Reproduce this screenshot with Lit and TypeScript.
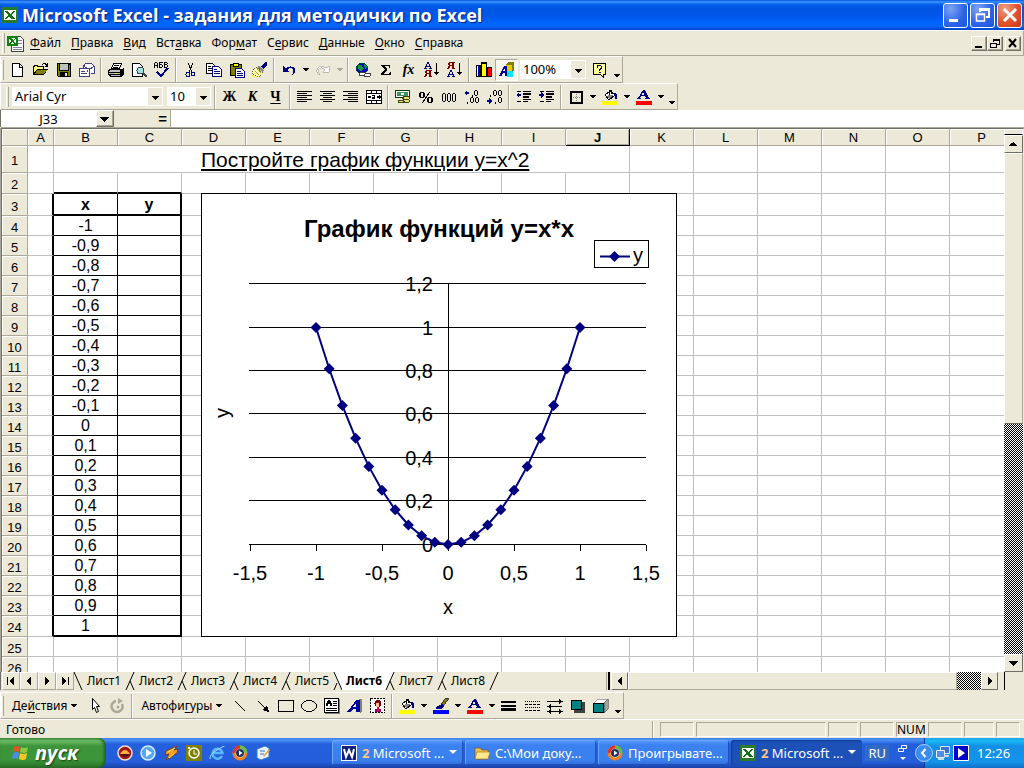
import { LitElement, html, svg, css, nothing } from "lit";
import { customElement } from "lit/decorators.js";
import { classMap } from "lit/directives/class-map.js";

const caretShape = svg`<path d="M5 7h6v1h-1v1h-1v1h-2v-1h-1v-1h-1z"/>`;
const bucket = svg`
  <path d="M3 6l5-4 5 4-6 5z" fill="#fff" stroke="#000"/>
  <path d="M7 6h5l-5 4-3-3z" fill="#808080"/>
  <path d="M7 6V1h2v4" fill="none" stroke="#000"/>
  <path d="M12 4h2v1h1v5h-2V7h-1z" fill="#000080"/>`;
const bars = (widths: number[], x: (w: number) => number) =>
  widths.map((w, i) => svg`<rect x=${x(w)} y=${2 + i * 2} width=${w} height="1"/>`);
const letterA = svg`<path d="M7 1h2l4 8h1v1H9V9h1L9 7H5L4 9h1v1H1V9h1zM7 3L5.500 6h3z" fill="#000080" fill-rule="evenodd"/>`;
const smallA = (y: number, c: string) => svg`<path d="M3 ${y}h2v2h1v2h1v2h1v1H5v-1h1v-1H2v1h1v1H0v-1h1v-2h1v-2h1zM3 ${y + 2}v2h2v-2z" fill=${c} fill-rule="evenodd"/>`;
const smallYa = (y: number, c: string) => svg`<path d="M2 ${y}h6v1H7v5h1v1H5V${y + 4}H3v2H2v1H0v-1h1v-2h1v-1H1v-2h1zM3 ${y + 1}v2h2v-2z" fill=${c} fill-rule="evenodd"/>`;
const zero = (x: number, y: number, h: number) => svg`<path d="M${x + 1} ${y}h2v1h1v${h - 2}h-1v1h-2v-1h-1v-${h - 2}h1zM${x + 1} ${y + 1}v${h - 2}h2v-${h - 2}z" fill-rule="evenodd"/>`;
const downArrow = svg`<path d="M12 1h1v9h2v1h-1v1h-1v1h-1v-1h-1v-1h-1v-1h2z"/>`;

const icons: Record<string, unknown> = {
  new: svg`<path d="M2.500 1.500h7l3 3v10h-10z" fill="#fff" stroke="#000"/><path d="M9 1v4h4" fill="none" stroke="#000"/>`,
  open: svg`<path d="M0 4h1V3h4v1h6v3h4l-4 6H0z" fill="#000"/><path d="M1 5h1V4h2v1h6v2H4l-3 4z" fill="#ffff80"/><path d="M4 8h10l-3 4H2z" fill="#808000"/><path d="M9 2h1V1h3v1h1V1h1v4h-3V4h1V3h-1V2h-2v1H9z"/>`,
  save: svg`<path d="M1 1h14v14H2l-1-1z"/><path d="M2 2h1v7h10V3h1v11H2z" fill="#808000"/><path d="M4 2h8v6H4z" fill="#c0c0c0"/><path d="M4 10h8v4H4z" fill="#000"/><path d="M9 11h2v3H9z" fill="#ece9d8"/>`,
  mail: svg`<path d="M4.500 8V4l2-2.500h6l3 3v7h-4" fill="#fff" stroke="#404080"/><path d="M5 4l5 4 5-4" fill="none" stroke="#404080"/><path d="M.5 6.500h10v8H.5z" fill="#fff" stroke="#404080"/><path d="M2 9h4v1H2zM2 11h6v1H2z" fill="#404080"/><path d="M8 8h1v2H8z" fill="#f00"/>`,
  print: svg`<path d="M5.500 1.500h8l-2 5h-8z" fill="#fff" stroke="#000"/><path d="M6 3h5v1H6zM5 5h5v1H5z"/><path d="M1 7h13l2-1v6l-2 3H2l-2-3V9z"/><path d="M2 8h10v2H1z" fill="#c0c0c0"/><path d="M1 11h11v1H1zM3 13h9v1H3z" fill="#c0c0c0"/><path d="M7 11h2v1H7z" fill="#ff0"/>`,
  preview: svg`<path d="M1.500 1.500h7l3 3v10h-10z" fill="#fff" stroke="#000"/><circle cx="9.500" cy="8.500" r="3.500" fill="#a0e0e0" stroke="#404040"/><path d="M12 11l4 4" stroke="#404040" stroke-width="2"/>`,
  spell: svg`<path d="M1 0h2v1h1v5H3V4H1v2H0V1h1zM1 1v2h2V1zM5 0h4v1H6v1h2v1h1v2H8v1H5zM6 3v2h2V3zM10 0h3v1h1v1h-1v1h1v2h-1v1h-3zM11 1v1h2V1zM11 3v2h2V3z" fill-rule="evenodd"/><path d="M3 10l4 4 7-8" fill="none" stroke="#000080" stroke-width="2"/>`,
  cut: svg`<path d="M5 1l4 9M10 1L6 10" fill="none" stroke="#000"/><circle cx="5" cy="12.500" r="2" fill="none" stroke="#000080"/><circle cx="10" cy="12" r="2" fill="none" stroke="#000080"/>`,
  copy: svg`<path d="M.5 1.500h6l2 2v8h-8z" fill="#fff" stroke="#000"/><path d="M2 4h3v1H2zM2 6h4v1H2zM2 8h4v1H2z"/><path d="M6.500 4.500h6l3 3v7h-9z" fill="#fff" stroke="#000080"/><path d="M8 7h3v1H8zM8 9h6v1H8zM8 11h6v1H8z" fill="#000080"/>`,
  paste: svg`<path d="M1 2h12v12H1z"/><path d="M2 3h10v10H2z" fill="#808000"/><path d="M4 1h6v4H4z" fill="#000"/><path d="M5 2h4v2H5z" fill="#ff0"/><path d="M6.500 6.500h6l3 3v6h-9z" fill="#fff" stroke="#000080"/><path d="M8 9h4v1H8zM8 11h6v1H8zM8 13h6v1H8z" fill="#000080"/>`,
  brush: svg`<path d="M15 0v3l-4 4-2-2 4-5z" fill="#000080"/><path d="M7 4l5 4-1 2-6-5z" fill="#808080"/><path d="M4 5l7 6-4 4-5-2-2-3z" fill="#ffffa0" stroke="#606040" stroke-dasharray="1 1"/><path d="M0 13h2v2H0zM3 14h2v1H3z" fill="#ff0"/><path d="M3 9l4 4M5 7l4 4" stroke="#a0a060"/>`,
  undo: svg`<path d="M2 4v6h6L6 8c3-4 8-2 6 3l-1 2 2-1c4-6-3-10-8-6z" fill="#000080"/>`,
  redo: svg`<path d="M14 4v6H8l2-2C7 4 2 6 4 11l1 2-2-1C-1 6 6 2 11 6z" fill="#fff" stroke="#aca899" stroke-width=".7"/>`,
  web: svg`<circle cx="7" cy="6.500" r="5.500" fill="#0000c0" stroke="#004040"/><path d="M3 3h4v2l2 1-3 3-3-2zM9 2l3 3-2 2zM5 10h4v2H6z" fill="#00a040"/><rect x="4.500" y="10.500" width="6" height="3" rx="1.500" fill="#fff" stroke="#404040"/><rect x="9.500" y="11.500" width="6" height="3" rx="1.500" fill="#fff" stroke="#404040"/>`,
  sum: svg`<path d="M3 3h9v3h-1V4H6l3 3v1l-4 4h6l1-2h1v3H3v-1l4-5-4-3z"/>`,
  sortAsc: svg`${smallA(0, "#000080")}${smallYa(8, "#800000")}${downArrow}`,
  sortDesc: svg`${smallYa(0, "#800000")}${smallA(8, "#000080")}${downArrow}`,
  chart: svg`<path d="M0 3h5v12H0zM5 0h6v15H5zM11 5h5v10h-5z"/><path d="M1 4h1v10H1z" fill="#fff"/><path d="M2 4h2v10H2z" fill="#0000c0"/><path d="M6 2h4v12H6z" fill="#ff0"/><path d="M12 6h3v8h-3z" fill="#f00"/>`,
  drawing: svg`<path d="M7 2l2-2h6v9l-2 1H7z" fill="#808000"/><path d="M7 3h6v6H7z" fill="#e8c800"/><path d="M0 14L5 4h3v10H6v-3H4l-1 3z" fill="#0000a0"/><path d="M4 9h2V6z" fill="#fff"/><circle cx="11" cy="12" r="3.500" fill="#00e8f8"/>`,
  help: svg`<path d="M1.500 1.500h12v11h-2v3l-3-3h-7z" fill="#ffffa0" stroke="#000"/><path d="M5 3h4v1h1v3H9v1H8v1H7V7h1V6h1V4H6v2H5zM7 10h2v1H7z" fill="#000080"/>`,
  left: svg`${bars([15, 10, 15, 10, 15, 10], () => 0)}`,
  center: svg`${bars([15, 9, 15, 9, 15, 9], (w) => (15 - w) / 2)}`,
  right: svg`${bars([15, 10, 15, 10, 15, 10], (w) => 15 - w)}`,
  merge: svg`<path d="M.5 1.500h15v13H.5z" fill="#fff"/><path d="M.5 1.500h15v13H.5zM.5 4.500h15M.5 11.500h15M5.500 1v3M10.500 1v3M5.500 12v3M10.500 12v3" fill="none" stroke="#000"/><path d="M1 8l2-2v1h2v2H3v1zM15 8l-2-2v1h-2v2h2v1zM6 6h3v4H6V8h2V7H6z"/>`,
  money: svg`<path d="M.5 1.500h14v7H.5z" fill="#fff" stroke="#004000"/><path d="M2 3h11v4H2z" fill="#409060"/><circle cx="7.500" cy="5" r="1.500" fill="#fff"/><ellipse cx="11" cy="9" rx="3.500" ry="1.500" fill="#e8e080" stroke="#404000"/><ellipse cx="11" cy="12" rx="3.500" ry="2" fill="#e8e080" stroke="#404000"/><ellipse cx="6" cy="12.500" rx="3" ry="1.500" fill="#e8e080" stroke="#404000"/>`,
  percent: svg`<path d="M11 3l1 .5L5 14l-1-.5z"/><ellipse cx="4" cy="6" rx="2" ry="2.500" fill="none" stroke="#000" stroke-width="1.500"/><ellipse cx="12" cy="11" rx="2" ry="2.500" fill="none" stroke="#000" stroke-width="1.500"/>`,
  thousands: svg`${zero(1, 4, 9)}${zero(6, 4, 9)}${zero(11, 4, 9)}`,
  incDec: svg`<path d="M0 4l3-3v2h2v2H3v2z" fill="#000080"/>${zero(10, 1, 6)}${zero(6, 8, 6)}${zero(11, 8, 6)}<path d="M8 6h1v2H8zM3 13h1v2H3z"/>`,
  decDec: svg`<path d="M5 12l-3-3v2H0v2h2v2z" fill="#000080"/>${zero(6, 1, 6)}${zero(11, 1, 6)}${zero(11, 8, 6)}<path d="M3 6h1v2H3zM8 13h1v2H8z"/>`,
  outdent: svg`<path d="M0 6l3-3v2h2v2H3v2z" fill="#000080"/><path d="M1 2h4v1H1zM7 2h8v1H7zM7 4h8v2H7zM7 7h6v2H7zM7 10h8v1H7zM1 12h4v1H1zM7 12h5v1H7z"/>`,
  indent: svg`<path d="M5 6L2 3v2H0v2h2v2z" fill="#000080"/><path d="M1 2h4v1H1zM7 2h8v1H7zM7 4h8v2H7zM7 7h6v2H7zM7 10h8v1H7zM1 12h4v1H1zM7 12h5v1H7z"/>`,
  border: svg`<path d="M3 3h11v11H3z" fill="none" stroke="#000" stroke-width="2"/><path d="M8.500 5v8M5 8.500h8" stroke="#808080" stroke-dasharray="1 1"/>`,
  fill: svg`${bucket}<path d="M0 12h16v4H0z" fill="#ff0"/>`,
  line: svg`<path d="M13 0h2v2l-5 6-2-2z" fill="#808000" stroke="#000" stroke-width=".7"/><path d="M9 6l2 2-3 3H3V9z" fill="#000080"/><path d="M0 12h16v4H0z" fill="#00f"/>`,
  font: svg`${letterA}<path d="M0 12h16v4H0z" fill="#f00"/>`,
  pointer: svg`<path d="M5.500.500l7 8h-3l2 5-2 1-2-5-2 2z" fill="#fff" stroke="#000" shape-rendering="auto"/>`,
  rotate: svg`<g shape-rendering="auto"><path d="M6 3a5.500 5.500 0 1 0 6 3" fill="none" stroke="#aca899" stroke-width="2.500"/><path d="M8 0l5 3-5 3z" fill="#aca899"/><circle cx="8" cy="9" r="1.500" fill="#aca899"/></g>`,
  straight: svg`<path d="M3 3l10 10" stroke="#000"/>`,
  arrow: svg`<path d="M3 3l7 7" stroke="#000"/><path d="M14 14l-2-7-5 5z"/>`,
  rect: svg`<path d="M.5 2.500h15v11H.5z" fill="none" stroke="#000"/>`,
  oval: svg`<ellipse cx="8" cy="8" rx="7.500" ry="5.500" fill="none" stroke="#000"/>`,
  textbox: svg`<path d="M.5.500h14v14H.5z" fill="#fff" stroke="#000"/><path d="M15 1h1v15H1v-1h14z" fill="#808080"/><path d="M4 2h2v1h1v2h1v3H6V6H4v2H2V5h1V3h1zM9 3h4v1H9zM9 5h4v1H9zM9 7h4v1H9zM2 10h11v1H2zM2 12h11v1H2z"/>`,
  wordart: svg`<path d="M12 1h3v12l-2 2z" fill="#808080"/><path d="M9 2h4v12H9v-3H6l-2 3H0v-1l2-1zM9 5L6 9h3z" fill="#0000a0" fill-rule="evenodd"/>`,
  clipart: svg`<path d="M.5.500h14v14H.5z" fill="#fff" stroke="#000" stroke-dasharray="2 1"/><circle cx="8" cy="5.500" r="3.500" fill="#800000"/><path d="M6 5h3v4H6z" fill="#ffc0a0"/><path d="M5 11h6v3H5z" fill="#800080"/><path d="M7 9h2v4H7z" fill="#f00"/>`,
  weight: svg`<path d="M0 3h15v2H0zM0 7h15v2H0zM0 10h15v3H0z"/>`,
  dash: svg`<path d="M1 3.500h15M1 9.500h15" stroke="#000" stroke-dasharray="1 1"/><path d="M1 6.500h15M1 12.500h15" stroke="#000" stroke-dasharray="3 1"/>`,
  arrows: svg`<path d="M0 3.500h14M2 8.500h13M2 13.500h12" stroke="#000"/><path d="M12 1l4 2.500-4 2.500zM4 6L0 8.500 4 11zM4 11L0 13.500 4 16zM12 11l4 2.500-4 2.500z"/>`,
  shadow: svg`<path d="M4 4h11v11H4z" fill="#404040"/><path d="M1.500 2.500h10v9h-10z" fill="#008080" stroke="#000"/>`,
  cube: svg`<path d="M1 5l4-4h10l-4 4z" fill="#fff" stroke="#808080" stroke-width=".7"/><path d="M11 5l4-4v10l-4 4z" fill="#a0a0a0" stroke="#606060" stroke-width=".7"/><path d="M.5 5.500h10v9H.5z" fill="#008080" stroke="#000"/>`,
};

const icon = (name: string, size = 16) =>
  html`<svg class="icon" viewBox="0 0 16 16" width=${size} height=${size} shape-rendering="crispEdges" aria-hidden="true">${icons[name]}</svg>`;
const tool = (name: string, label: string, pressed = false) =>
  html`<button class=${classMap({ tool: true, pressed })} aria-label=${label}>${icon(name)}</button>`;
const caret = (label: string, dim = false) =>
  html`<button class=${classMap({ caret: true, dim })} aria-label=${label}><svg viewBox="5 7 6 3" width="6" height="3" shape-rendering="crispEdges">${caretShape}</svg></button>`;
const more = html`<button class="caret more" aria-label="Другие кнопки"><svg viewBox="5 7 6 3" width="6" height="3" shape-rendering="crispEdges">${caretShape}</svg></button>`;
const sep = html`<span class="sep"></span>`;
const grip = html`<span class="grip"></span>`;
const tri = (d: string) =>
  html`<svg viewBox="0 0 10 10" width="10" height="10" shape-rendering="crispEdges" aria-hidden="true"><path d=${d} /></svg>`;
const UP = "M4 3h1v1h1v1h1v1h1v1H0V6h1V5h1V4h2z";
const LEFT = "M7 1v8H6V8H5V7H4V6H3V4h1V3h1V2h1V1z";
const RIGHT = "M3 1v8h1V8h1V7h1V6h1V4H6V3H5V2H4V1z";
const DOWN = "M0 3h9v1H8v1H7v1H6v1H5v1H4V7H3V6H2V5H1V4H0z";

@customElement("xl-chart")
export class XlChart extends LitElement {
  static styles = css`
    :host { display: block; }
    svg { display: block; background: #fff; border: 1px solid #000; box-sizing: border-box; }
    text { font-family: "Liberation Sans", Arial, sans-serif; font-size: 20px; }
    .title { font-size: 24px; font-weight: 700; }
    .grid { stroke: #000; fill: none; shape-rendering: crispEdges; }
    .series { stroke: #000080; fill: none; stroke-width: 2; }
    .mark { fill: #000080; }
  `;

  render() {
    const px = (v: number) => 246 + 132 * v;
    const py = (v: number) => 350.5 - 217 * v;
    const label = (v: number) => String(v).replace(".", ",");
    const points = Array.from({ length: 21 }, (_, i) => (i - 10) / 10).map((x) => [px(x), py(x * x)]);
    const diamond = (x: number, y: number) => svg`<path class="mark" d="M${x} ${y - 5.5}l5.500 5.500-5.500 5.500-5.500-5.500z"/>`;
    return html`
      <svg width="476" height="444" viewBox="0 0 474 442" role="img" aria-label="График функций">
        <text class="title" x="237" y="43" text-anchor="middle">График функций y=x*x</text>
        <g class="grid">
          ${[0, 0.2, 0.4, 0.6, 0.8, 1, 1.2].map((v) => svg`<path d="M47 ${Math.round(py(v)) - 0.5}H444"/>`)}
          ${[-1.5, -1, -0.5, 0, 0.5, 1, 1.5].map((v) => svg`<path d="M${Math.floor(px(v)) + 0.5} 351v6"/>`)}
          <path d="M246.500 90v261" />
        </g>
        ${[0, 0.2, 0.4, 0.6, 0.8, 1, 1.2].map((v) => svg`<text x="231" y=${Math.round(py(v)) + 7} text-anchor="end">${label(v)}</text>`)}
        ${[-1.5, -1, -0.5, 0, 0.5, 1, 1.5].map((v) => svg`<text x=${px(v)} y="386" text-anchor="middle">${label(v)}</text>`)}
        <polyline class="series" points=${points.map((p) => p.join(",")).join(" ")} />
        ${points.map(([x, y]) => diamond(x, y))}
        <text x="246" y="420" text-anchor="middle">x</text>
        <text transform="translate(27 219) rotate(-90)" text-anchor="middle">y</text>
        <rect class="grid" x="392.500" y="46.500" width="54" height="27" />
        <path class="series" d="M398 62.500h30" />
        ${diamond(412.5, 62.5)}
        <text x="431" y="68">y</text>
      </svg>
    `;
  }
}

@customElement("app-root")
export class AppRoot extends LitElement {
  static styles = css`
    :host {
      --face: #ece9d8;
      --shade: #aca899;
      --dark: #716f64;
      --ui: "Noto Sans", Tahoma, sans-serif;
      display: flex;
      flex-direction: column;
      height: 100vh;
      overflow: hidden;
      background: var(--face);
      color: #000;
      font: 12px/16px var(--ui);
    }
    * { box-sizing: border-box; }
    button, input, select { font: inherit; color: inherit; border: 0; margin: 0; padding: 0; background: none; border-radius: 0; }
    button { display: flex; align-items: center; justify-content: center; flex: none; }
    svg { display: block; flex: none; }
    u { text-underline-offset: 2px; }

    .title { display: flex; align-items: center; flex: none; height: 30px; padding: 0 2px 0 2px; gap: 4px; color: #fff;
      background: linear-gradient(#0a57e0 0, #3c96ff 2px, #0a62f0 4px, #0054e3 8px, #0058ea 17px, #0066ff 23px, #0066fc 26px, #0043cf 30px); }
    .title h1 { flex: 1; margin: 0; font: 700 18px/30px "Open Sans", "Trebuchet MS", sans-serif; white-space: nowrap; text-shadow: 1px 1px 1px #0a1f80; }
    .win { width: 25px; height: 25px; border: 1px solid #fff; border-radius: 3px; background: radial-gradient(at 30% 20%, #7fa4f5, #2a62e8 60%, #1c54dc); }
    .win + .win { margin-left: -2px; }
    .win.close { background: radial-gradient(at 30% 20%, #f0a080, #e0532e 55%, #c83a10); }

    .menu { display: flex; align-items: center; flex: none; height: 26px; padding: 0 2px; border-top: 1px solid #fff; border-bottom: 1px solid var(--shade); border-right: 1px solid var(--shade); }
    .menu nav { display: flex; flex: 1; gap: 10px; padding-left: 6px; }
    .menu a { color: #000; text-decoration: none; }
    .grip { flex: none; width: 3px; height: 20px; border-right: 1px solid var(--shade); border-left: 1px solid #fff; margin-right: 2px; }
    .mdi { width: 16px; height: 15px; border: 1px solid; border-color: #fff var(--dark) var(--dark) #fff; background: var(--face); box-shadow: inset -1px -1px var(--shade); }
    .mdi.gap { margin-left: 2px; }

    .bar { display: flex; align-items: center; align-self: flex-start; flex: none; height: 27px; border: 1px solid; border-color: #fff var(--shade) var(--shade) #fff; }
    .bar.format { padding-left: 5px; }
    .bar.format .grip { margin-right: 3px; }
    .tool { width: 23px; height: 22px; }
    .tool.pressed { border: 1px solid; border-color: var(--shade) #fff #fff var(--shade); background: #f8f6ee; }
    .caret { width: 11px; height: 22px; }
    .caret.dim { fill: var(--shade); }
    .more { align-items: flex-end; padding-bottom: 4px; }
    .sep { flex: none; width: 2px; height: 24px; margin: 0 2px; border-left: 1px solid var(--shade); border-right: 1px solid #fff; }
    .bold, .italic, .under, .fx { font: 700 14px/16px "Liberation Serif", serif; }
    .italic { font-style: italic; }
    .under { text-decoration: underline; text-underline-offset: 2px; }
    .fx { font: italic 700 14px/16px "Liberation Serif", serif; }
    .combo { display: grid; align-items: center; height: 19px; margin: 0 2px 0 0; background: #fff; border: 1px solid #fff; }
    .combo select { grid-area: 1 / 1; appearance: none; width: 100%; height: 17px; padding-left: 2px; font-size: 13px; line-height: 17px; }
    .combo svg { grid-area: 1 / 1; justify-self: end; width: 14px; height: 17px; background: var(--face); pointer-events: none; }
    .combo.font { width: 151px; }
    .combo.size { width: 44px; margin-right: 1px; margin-left: 2px; }
    .combo.zoom { width: 66px; margin-left: 2px; }
    .textual { padding: 0 6px; height: 22px; gap: 4px; }

    .formula { display: flex; flex: none; height: 17px; }
    .formula .name { width: 96px; background: #fff; text-align: center; font-size: 13px; border-left: 1px solid var(--dark); }
    .drop { width: 18px; border: 1px solid; border-color: #fff var(--dark) var(--dark) #fff; box-shadow: inset -1px -1px var(--shade); }
    .formula .eq { width: 57px; padding-right: 3px; justify-content: flex-end; border-right: 1px solid var(--shade); font: 700 15px/16px "Liberation Sans", sans-serif; }
    .formula .value { flex: 1; min-width: 0; background: #fff; }

    .work { display: flex; flex: 1; min-height: 0; border: 1px solid; border-color: var(--dark) var(--face) transparent var(--dark); border-bottom: 0; margin-left: 1px; box-shadow: 0 -1px var(--shade), -1px 0 var(--shade); margin-top: 1px; }
    .sheet { position: relative; flex: 1; min-width: 0; overflow: hidden; background: #fff; }
    .cells { width: calc(52px + 15 * 64px); min-width: 100%; table-layout: fixed; border-collapse: separate; border-spacing: 0; font: 16px/18px "Liberation Sans", Arial, sans-serif; text-align: center; }
    .cells th { font-weight: 400; font-size: 13px; line-height: 15px; padding: 0; background: var(--face); border-right: 1px solid var(--shade); border-bottom: 1px solid var(--shade); box-shadow: inset 1px 1px #fff; }
    .cells tbody th { padding-top: 3px; }
    .cells th.on { font-weight: 700; border-color: #000; box-shadow: inset 1px 1px #fff, inset -1px -1px var(--shade); }
    .cells td { padding: 1px 0 0; border-right: 1px solid #c0c0c0; border-bottom: 1px solid #c0c0c0; white-space: nowrap; }
    .c-rh { width: 26px; } .c-a { width: 26px; } .c-std { width: 64px; }
    .r-head { height: 17px; } .r-1 { height: 27px; } .r-2, .r-24 { height: 21px; } .r-3 { height: 22px; } .r-n { height: 20px; }
    .cells td.heading { text-align: left; padding-left: 147px; font-size: 21px; line-height: 22px; text-decoration: underline; text-decoration-thickness: 2px; text-underline-offset: 2px; }
    .cells td.v { border-color: #000; }
    .cells td.head { font-weight: 700; }
    .cells td.wr { border-right: 2px solid #000; }
    .cells td.wb { border-bottom: 2px solid #000; }
    xl-chart { position: absolute; left: 199px; top: 64px; }

    .vscroll { display: flex; flex-direction: column; flex: none; width: 19px; background: var(--face); }
    .dither { background: repeating-conic-gradient(#000 0 25%, #fff 0 50%) 0 0 / 2px 2px; }
    .split { height: 6px; border: 1px solid #fff; border-bottom-color: #000; }
    .sbtn { border: 1px solid; border-color: #fff var(--dark) var(--dark) #fff; background: var(--face); }
    .vscroll .sbtn { height: 18px; width: 100%; }
    .vscroll .thumb { flex: 270; border: 1px solid; border-color: #fff var(--shade) var(--dark) #fff; }
    .vscroll .dither { flex: 231; }

    .tabs { display: flex; flex: none; height: 18px; padding-left: 1px; border-left: 1px solid var(--dark); }
    .tabs .nav { width: 18px; border: 1px solid; border-color: #fff var(--shade) var(--shade) #fff; }
    .tab { width: 44px; height: 18px; white-space: nowrap; }
    .tab.on { background: #fff; font-weight: 700; }
    .slash { overflow: visible; }
    .hscroll { display: flex; width: 418px; margin-left: auto; }
    .hscroll .bar-split { width: 4px; border-left: 1px solid var(--shade); border-right: 2px solid #000; margin-right: 1px; }
    .hscroll .sbtn { width: 17px; }
    .hscroll .thumb { flex: 328; border: 1px solid; border-color: #fff var(--shade) var(--shade) #fff; }
    .hscroll .dither { flex: 24; }
    .hscroll .end { width: 20px; border-left: 1px solid #000; margin-left: 6px; }

    .drawbar { margin-top: 2px; }
    .status { display: flex; flex: none; align-items: center; height: 19px; gap: 2px; padding: 1px 4px 0 6px; border-top: 1px solid #fff; }
    .status output { flex: 1; }
    .status .panel { height: 15px; border: 1px solid; border-color: var(--shade) #fff #fff var(--shade); line-height: 14px; text-align: center; }
    .status .edge { width: 2px; height: 18px; border-left: 1px solid var(--shade); border-right: 1px solid #fff; margin-right: 4px; }
    .p1 { width: 34px; } .p2 { width: 130px; } .p3 { width: 30px; } .p4 { width: 24px; }

    .task { display: flex; flex: none; align-items: stretch; height: 30px; color: #fff; background: linear-gradient(#3a80ee 0, #4a93f5 2px, #2560dc 6px, #245edb 24px, #1941a5 30px); font-size: 13px; }
    .start { width: 106px; justify-content: flex-start; padding-left: 11px; gap: 6px; border-radius: 0 8px 8px 0; background: linear-gradient(#4f9d4a 0, #6cbb68 3px, #3d943a 8px, #3b9639 22px, #2a6f28 30px); box-shadow: inset -2px 0 3px #1f5f1e; font: italic 700 20px/24px "Open Sans", sans-serif; text-shadow: 1px 1px 2px #143c14; }
    .quick { display: flex; align-items: center; gap: 7px; padding-left: 11px; width: 226px; }
    .quick button { width: 16px; height: 16px; }
    .apps { display: flex; flex: 1; gap: 2px; padding: 2px 0 3px; min-width: 0; }
    .app { flex: 0 1 131px; min-width: 0; justify-content: flex-start; gap: 5px; padding: 0 6px 0 9px; border-radius: 3px; background: linear-gradient(#5a9cff, #3c81f0 5px, #3b80ef 20px, #2f6bdb); box-shadow: inset 1px 1px #6ba6ff, inset -1px -1px #2350b8; }
    .app span { flex: 1; text-align: left; white-space: nowrap; }
    .app b { color: #ffc87a; font-weight: 700; }
    .app.on { background: #1e51b8; box-shadow: inset 1px 1px 2px #123c8c; }
    .lang { display: flex; align-items: center; gap: 9px; padding: 0 17px 0 0; }
    .lang span { background: #316ac5; padding: 0 3px; }
    .tray { display: flex; align-items: center; flex: none; width: 100px; gap: 2px; background: linear-gradient(#18a4f0 0, #19b9f3 3px, #1290e8 8px, #1493ea 24px, #0f6fc8 30px); border-left: 1px solid #0b3b9c; }
    .tray button { margin-left: -10px; }
    .tray time { margin-left: 6px; }
  `;

  private sheetTable() {
    const cols = "ABCDEFGHIJKLMNOP".split("");
    const values = Array.from({ length: 21 }, (_, i) => String((i - 10) / 10).replace(".", ","));
    const cell = (r: number, c: string) => {
      const inTable = r >= 3 && r <= 24;
      const data = (c === "B" || c === "C") && inTable;
      const text = data ? (r === 3 ? (c === "B" ? "x" : "y") : c === "B" ? values[r - 4] : "") : "";
      return html`<td class=${classMap({
        v: data,
        head: data && r === 3,
        wr: (c === "A" || c === "C") && inTable,
        wb: (c === "B" || c === "C") && (r === 2 || r === 3 || r === 24),
      })}>${text}</td>`;
    };
    const rowClass = (r: number) => ([1, 2, 3, 24].includes(r) ? `r-${r}` : "r-n");
    return html`
      <table class="cells">
        <colgroup>
          <col class="c-rh" /><col class="c-a" />
          ${cols.slice(1).map(() => html`<col class="c-std" />`)}
        </colgroup>
        <thead>
          <tr class="r-head"><th></th>${cols.map((c) => html`<th scope="col" class=${classMap({ on: c === "J" })}>${c}</th>`)}</tr>
        </thead>
        <tbody>
          ${Array.from({ length: 26 }, (_, i) => i + 1).map((r) => html`
            <tr class=${rowClass(r)}>
              <th scope="row">${r}</th>
              ${r === 1
                ? html`<td></td><td class="heading" colspan="9">Постройте график функции y=x^2</td>${cols.slice(10).map(() => html`<td></td>`)}`
                : cols.map((c) => cell(r, c))}
            </tr>`)}
        </tbody>
      </table>`;
  }

  private slash(before: boolean, after: boolean) {
    return html`<svg class="slash" width="8" height="18" viewBox="0 0 8 18" aria-hidden="true">
      ${before ? svg`<path d="M0 0h8v18z" fill="#fff"/>` : nothing}
      ${after ? svg`<path d="M0 0h8L0 18z" fill="#fff"/>` : nothing}
      <path d=${before ? "M0 0l8 18M0 18l3-7" : "M8 0L0 18M4 9l4 9"} fill="none" stroke="#000" />
    </svg>`;
  }

  render() {
    const menu = [["", "Ф", "айл"], ["", "П", "равка"], ["", "В", "ид"], ["Вст", "а", "вка"], ["Фор", "м", "ат"], ["С", "е", "рвис"], ["", "Д", "анные"], ["", "О", "кно"], ["", "С", "правка"]];
    const sheets = [1, 2, 3, 4, 5, 6, 7, 8];
    const excel = html`<svg viewBox="0 0 16 16" width="16" height="16" shape-rendering="crispEdges" aria-hidden="true"><path d="M0 0h16v16H0z" fill="#2a7a2a"/><path d="M2 3h12v10H2z" fill="#fff"/><path d="M3 4h3l2 3 3-3h2L9 8l4 4H9L7 9l-3 3H3l3-4z" fill="#107010"/></svg>`;
    return html`
      <header class="title">
        ${excel}
        <h1>Microsoft Excel - задания для методички по Excel</h1>
        <button class="win" aria-label="Свернуть"><svg width="18" height="18"><path d="M2 13h9v3H2z" fill="#fff" /></svg></button>
        <button class="win" aria-label="Восстановить"><svg width="18" height="18" fill="none" stroke="#fff"><path d="M6 6V3h9v8h-3M6 4h9" stroke-width="2" /><path d="M2.500 8h8v7h-8zM2 8.500h9" stroke-width="1.500" /></svg></button>
        <button class="win close" aria-label="Закрыть"><svg width="18" height="18"><path d="M3 3l12 12M15 3L3 15" stroke="#fff" stroke-width="3" /></svg></button>
      </header>

      <div class="menu">
        ${grip}
        <svg width="17" height="17" viewBox="0 0 17 17" shape-rendering="crispEdges" aria-hidden="true"><path d="M4.500 1.500h9l3 3v12h-12z" fill="#fff" stroke="#404040"/><path d="M11 5h4v1h-4zM11 8h4v1h-4zM6 12h9v1H6zM6 14h9v1H6z" fill="#8080a0"/><path d="M0 1h11v10H0z" fill="#108010"/><path d="M2 3h7v6H2z" fill="#fff"/><path d="M2 3h2l2 2 2-2h1L7 6l2 3H7L5.500 7 4 9H2l2-3z" fill="#108010"/></svg>
        <nav>${menu.map(([a, b, c]) => html`<a href="#">${a}<u>${b}</u>${c}</a>`)}</nav>
        <button class="mdi" aria-label="Свернуть окно"><svg width="12" height="11"><path d="M2 8h7v2H2z" /></svg></button>
        <button class="mdi" aria-label="Восстановить окно"><svg width="12" height="11" fill="none" stroke="#000" shape-rendering="crispEdges"><path d="M4 4V1.500h6v5H8M4 2h6M1.500 5h6v4.500h-6zM1 5.500h7" /></svg></button>
        <button class="mdi gap" aria-label="Закрыть окно"><svg width="12" height="11"><path d="M2 1l7 8M9 1L2 9" stroke="#000" stroke-width="2" /></svg></button>
      </div>

      <div class="bar" role="toolbar" aria-label="Стандартная">
        ${grip}
        ${tool("new", "Создать")}${tool("open", "Открыть")}${tool("save", "Сохранить")}${tool("mail", "Письмо")}${sep}
        ${tool("print", "Печать")}${tool("preview", "Просмотр")}${tool("spell", "Орфография")}${sep}
        ${tool("cut", "Вырезать")}${tool("copy", "Копировать")}${tool("paste", "Вставить")}${tool("brush", "Формат по образцу")}${sep}
        ${tool("undo", "Отменить")}${caret("Список отмены")}${tool("redo", "Вернуть")}${caret("Список возврата", true)}${sep}
        ${tool("web", "Гиперссылка")}${tool("sum", "Автосумма")}
        <button class="tool fx" aria-label="Функция">fx</button>
        ${tool("sortAsc", "По возрастанию")}${tool("sortDesc", "По убыванию")}${sep}
        ${tool("chart", "Диаграмма")}${tool("drawing", "Рисование", true)}
        <label class="combo zoom"><select aria-label="Масштаб"><option>100%</option></select><svg viewBox="0 0 14 17" shape-rendering="crispEdges"><path d="M4 8h7v1h-1v1H9v1H8v1H7v-1H6v-1H5V9H4z" /></svg></label>
        ${tool("help", "Справка")}${more}
      </div>

      <div class="bar format" role="toolbar" aria-label="Форматирование">
        ${grip}
        <label class="combo font"><select aria-label="Шрифт"><option>Arial Cyr</option></select><svg viewBox="0 0 14 17" shape-rendering="crispEdges"><path d="M4 8h7v1h-1v1H9v1H8v1H7v-1H6v-1H5V9H4z" /></svg></label>
        <label class="combo size"><select aria-label="Размер"><option>10</option></select><svg viewBox="0 0 14 17" shape-rendering="crispEdges"><path d="M4 8h7v1h-1v1H9v1H8v1H7v-1H6v-1H5V9H4z" /></svg></label>${sep}
        <button class="tool bold">Ж</button><button class="tool italic">К</button><button class="tool under">Ч</button>${sep}
        ${tool("left", "По левому краю")}${tool("center", "По центру")}${tool("right", "По правому краю")}${tool("merge", "Объединить")}${sep}
        ${tool("money", "Денежный формат")}${tool("percent", "Процентный формат")}${tool("thousands", "Формат с разделителями")}${tool("incDec", "Увеличить разрядность")}${tool("decDec", "Уменьшить разрядность")}${sep}
        ${tool("outdent", "Уменьшить отступ")}${tool("indent", "Увеличить отступ")}${sep}
        ${tool("border", "Границы")}${caret("Список границ")}${tool("fill", "Цвет заливки")}${caret("Список заливки")}${tool("font", "Цвет шрифта")}${caret("Список цветов")}${more}
      </div>

      <div class="formula">
        <input class="name" aria-label="Имя" value="J33" />
        <button class="drop" aria-label="Список имён">${tri(DOWN)}</button>
        <button class="eq">=</button>
        <input class="value" aria-label="Строка формул" />
      </div>

      <main class="work">
        <div class="sheet">
          ${this.sheetTable()}
          <xl-chart></xl-chart>
        </div>
        <div class="vscroll">
          <div class="split"></div>
          <button class="sbtn" aria-label="Вверх">${tri(UP)}</button>
          <div class="thumb"></div>
          <div class="dither"></div>
          <button class="sbtn" aria-label="Вниз">${tri(DOWN)}</button>
        </div>
      </main>

      <div class="tabs">
        <button class="nav" aria-label="Первый лист">${tri("M1 1h1v8H1zM8 1v8H7V8H6V7H5V6H4V4h1V3h1V2h1V1z")}</button>
        <button class="nav" aria-label="Предыдущий лист">${tri(LEFT)}</button>
        <button class="nav" aria-label="Следующий лист">${tri(RIGHT)}</button>
        <button class="nav" aria-label="Последний лист">${tri("M8 1h1v8H8zM2 1v8h1V8h1V7h1V6h1V4H5V3H4V2H3V1z")}</button>
        <svg class="slash" width="8" height="18" aria-hidden="true"><path d="M0 0l8 18" stroke="#000" /></svg>
        ${sheets.map((n) => html`<button class=${classMap({ tab: true, on: n === 6 })}>Лист${n}</button>${n === 8
          ? html`<svg class="slash" width="8" height="18" aria-hidden="true"><path d="M8 0L0 18" stroke="#000" /></svg>`
          : this.slash(n === 5, n === 6)}`)}
        <div class="hscroll">
          <span class="bar-split"></span>
          <button class="sbtn" aria-label="Влево">${tri(LEFT)}</button>
          <div class="thumb"></div>
          <div class="dither"></div>
          <button class="sbtn" aria-label="Вправо">${tri(RIGHT)}</button>
          <span class="end"></span>
        </div>
      </div>

      <div class="bar drawbar" role="toolbar" aria-label="Рисование">
        ${grip}
        <button class="textual"><span>Де<u>й</u>ствия</span><svg viewBox="5 7 6 3" width="6" height="3">${caretShape}</svg></button>
        ${tool("pointer", "Выбор объектов")}${tool("rotate", "Свободное вращение")}${sep}
        <button class="textual"><span>Автофи<u>г</u>уры</span><svg viewBox="5 7 6 3" width="6" height="3">${caretShape}</svg></button>
        ${tool("straight", "Линия")}${tool("arrow", "Стрелка")}${tool("rect", "Прямоугольник")}${tool("oval", "Овал")}${tool("textbox", "Надпись")}${tool("wordart", "WordArt")}${tool("clipart", "Картинка")}${sep}
        ${tool("fill", "Цвет заливки")}${caret("Список заливки")}${tool("line", "Цвет линий")}${caret("Список линий")}${tool("font", "Цвет шрифта")}${caret("Список шрифта")}
        ${tool("weight", "Тип линии")}${tool("dash", "Тип штриха")}${tool("arrows", "Вид стрелки")}${tool("shadow", "Тень")}${tool("cube", "Объём")}${more}
      </div>

      <footer class="status">
        <output>Готово</output>
        <span class="edge"></span>
        <span class="panel p1"></span><span class="panel p2"></span><span class="panel p3"></span><span class="panel p1"></span>
        <span class="panel p3">NUM</span><span class="panel p1"></span><span class="panel p3"></span><span class="panel p4"></span>
      </footer>

      <div class="task">
        <button class="start">
          <svg width="18" height="18" viewBox="0 0 18 18" aria-hidden="true"><path d="M3 3q3-2 6 0L8 8q-3-2-6 0z" fill="#e8502a"/><path d="M10 3q3 2 7 0l-1 5q-3 2-7 0z" fill="#8cc840"/><path d="M2 9q3-2 6 0l-1 6q-3-2-6 0z" fill="#4a8cf0"/><path d="M9 9q3 2 7 0l-1 6q-3 2-7 0z" fill="#f8c820"/></svg>
          пуск
        </button>
        <div class="quick">
          <button aria-label="Браузер"><svg width="16" height="16"><circle cx="8" cy="8" r="7" fill="#a01818" stroke="#f0e0d0" stroke-width="1.500"/><path d="M3 9q5-8 10 0z" fill="#ffb040"/><path d="M3 9h10q-5 6-10 0z" fill="#501010"/></svg></button>
          <button aria-label="Проигрыватель"><svg width="16" height="16"><circle cx="8" cy="8" r="7" fill="#58a8f0" stroke="#d8ecff" stroke-width="1.500"/><path d="M6 4l6 4-6 4z" fill="#fff"/></svg></button>
          <button aria-label="Winamp"><svg width="16" height="16"><path d="M14 1L3 6l-1 4 4-1-3 6 11-7 1-4-4 1z" fill="#f8a020" stroke="#704010"/><path d="M12 3L5 7M11 9l-5 4" stroke="#ffe080"/></svg></button>
          <button aria-label="Органайзер"><svg width="16" height="16"><path d="M0 0h16v16H0z" fill="#808000"/><circle cx="8" cy="8" r="5" fill="none" stroke="#fff" stroke-width="1.500"/><path d="M8 5v4h3" fill="none" stroke="#fff"/><path d="M2 2h2v2H2z" fill="#fff"/></svg></button>
          <button aria-label="Internet Explorer"><svg width="16" height="16"><path d="M13 11a5 5 0 1 1 .5-3H5" fill="none" stroke="#58b8ff" stroke-width="2.500"/><path d="M1 14Q0 10 8 5t7-3" fill="none" stroke="#a8dcff"/></svg></button>
          <button aria-label="Media Player"><svg width="16" height="16"><circle cx="8" cy="8" r="6" fill="#fff" stroke="#f08020" stroke-width="3"/><path d="M8 2a6 6 0 0 1 6 6" fill="none" stroke="#60c040" stroke-width="3"/><path d="M2 8a6 6 0 0 1 6-6" fill="none" stroke="#e03030" stroke-width="3"/><circle cx="8" cy="8" r="4" fill="#203060"/><path d="M7 5.500l3.500 2.500L7 10.500z" fill="#fff"/></svg></button>
          <button aria-label="Рабочий стол"><svg width="16" height="16"><path d="M2 4l8-3 4 2v9l-8 3-4-2z" fill="#e8f4ff" stroke="#3878c0"/><path d="M5 6h5M5 9h4" stroke="#3878c0"/><path d="M8 11l6-7 1 1-6 7z" fill="#f0a030"/></svg></button>
        </div>
        <div class="apps">
          <button class="app"><svg width="16" height="16"><path d="M0 0h16v16H0z" fill="#fff"/><path d="M1 1h14v14H1z" fill="#10207a"/><path d="M3 4l2 8 3-7 3 7 2-8" fill="none" stroke="#fff" stroke-width="2"/></svg><span><b>2</b> Microsoft ...</span><svg width="8" height="5"><path d="M0 0h8L4 4z" fill="#fff"/></svg></button>
          <button class="app"><svg width="16" height="16"><path d="M1 3h5l2 2h6v9H1z" fill="#e8c050" stroke="#805810" stroke-width=".7"/><path d="M3 7h13l-2 7H1z" fill="#ffe890" stroke="#a07820" stroke-width=".7"/></svg><span>C:\\Мои доку...</span></button>
          <button class="app"><svg width="16" height="16"><circle cx="8" cy="8" r="6" fill="#fff" stroke="#f08020" stroke-width="3"/><path d="M8 2a6 6 0 0 1 6 6" fill="none" stroke="#60c040" stroke-width="3"/><path d="M2 8a6 6 0 0 1 6-6" fill="none" stroke="#e03030" stroke-width="3"/><circle cx="8" cy="8" r="4" fill="#203060"/><path d="M7 5.500l3.500 2.500L7 10.500z" fill="#fff"/></svg><span>Проигрывате...</span></button>
          <button class="app on">${excel}<span><b>2</b> Microsoft ...</span><svg width="8" height="5"><path d="M0 0h8L4 4z" fill="#fff"/></svg></button>
        </div>
        <div class="lang"><span>RU</span><svg width="9" height="18"><path d="M3.500 1.500h5v3h-5zM.5 4.500h5v3h-5z" fill="#245edb" stroke="#fff"/><path d="M2 13h6l-3 3z" fill="#fff"/></svg></div>
        <div class="tray">
          <button aria-label="Показать значки"><svg width="18" height="18"><circle cx="9" cy="9" r="8.500" fill="#3a8cf0" stroke="#a0d0ff"/><path d="M10.500 5L7 9l3.500 4" fill="none" stroke="#fff" stroke-width="2"/></svg></button>
          <svg width="16" height="16" aria-hidden="true"><path d="M5.500 1.500h9v7h-9z" fill="#3a70d0" stroke="#d8e8ff"/><path d="M1.500 5.500h8v7h-8z" fill="#5090e8" stroke="#e8f0ff"/><path d="M3 14h6M9 11h5" stroke="#c8d8f0" stroke-width="2"/></svg>
          <svg width="16" height="16" aria-hidden="true"><path d="M.5.500h15v15H.5z" fill="#0000c8" stroke="#fff"/><path d="M5 3l7 5-7 5z" fill="#fff"/></svg>
          <time>12:26</time>
        </div>
      </div>
    `;
  }
}
